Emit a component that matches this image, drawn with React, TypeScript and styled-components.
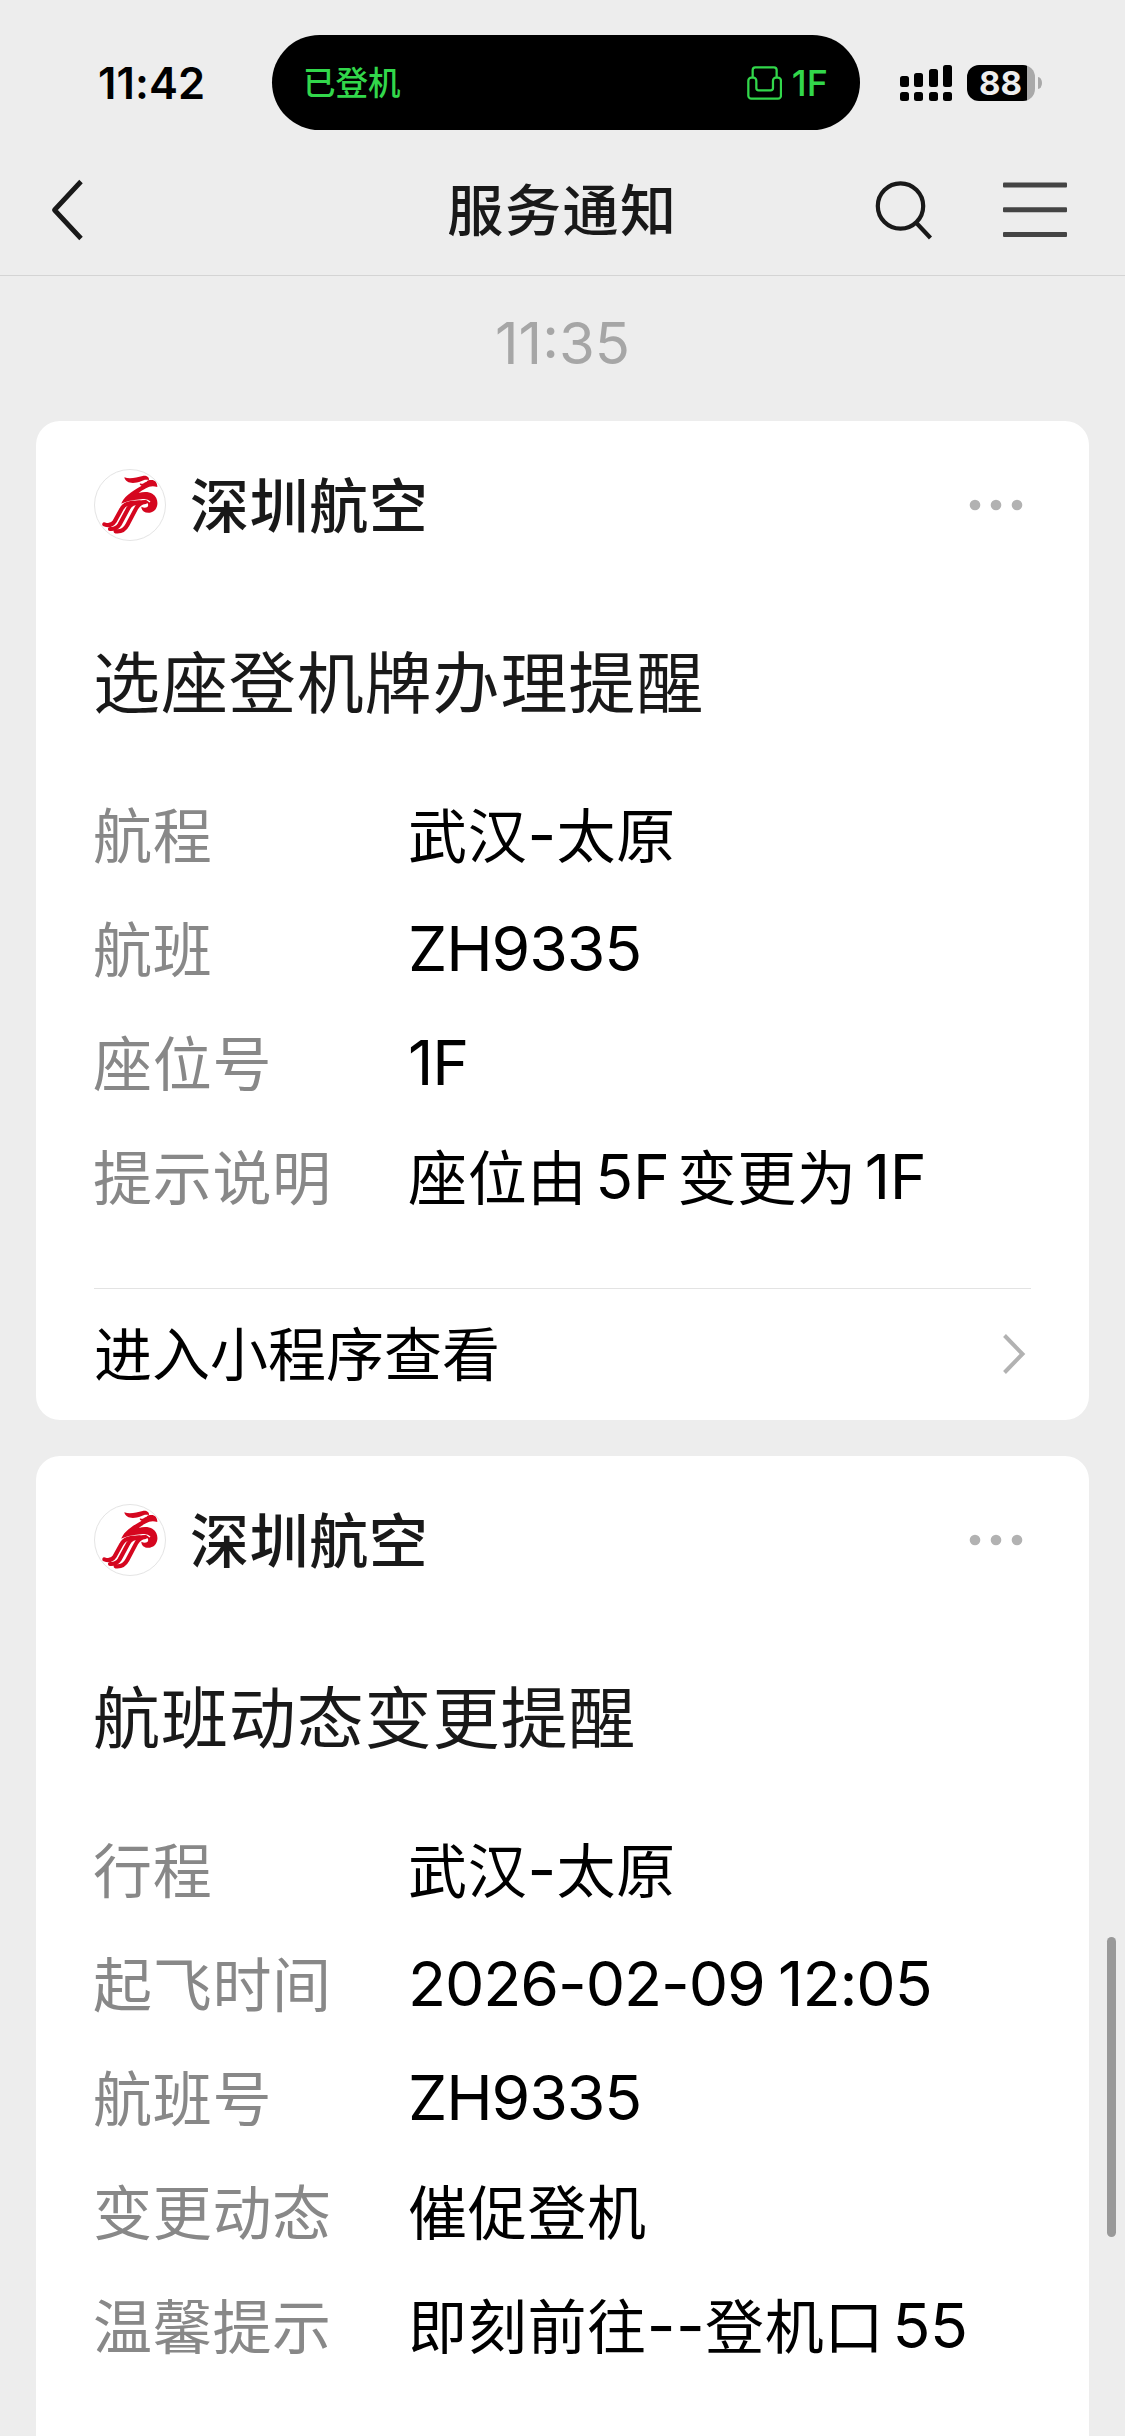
import styled, { createGlobalStyle } from 'styled-components';

type Field = { label: string; value: string };
type Notice = { title: string; fields: Field[]; action?: string };

const notices: Notice[] = [
  {
    title: '选座登机牌办理提醒',
    fields: [
      { label: '航程', value: '武汉-太原' },
      { label: '航班', value: 'ZH9335' },
      { label: '座位号', value: '1F' },
      { label: '提示说明', value: '座位由 5F 变更为 1F' },
    ],
    action: '进入小程序查看',
  },
  {
    title: '航班动态变更提醒',
    fields: [
      { label: '行程', value: '武汉-太原' },
      { label: '起飞时间', value: '2026-02-09 12:05' },
      { label: '航班号', value: 'ZH9335' },
      { label: '变更动态', value: '催促登机' },
      { label: '温馨提示', value: '即刻前往--登机口 55' },
    ],
  },
];

export default function App() {
  return (
    <Screen>
      <GlobalStyle />
      <Header>
        <StatusBar>
          <Clock>11:42</Clock>
          <Island>
            <IslandText>已登机</IslandText>
            <SeatInfo>
              <SeatIcon />
              1F
            </SeatInfo>
          </Island>
          <SignalIcon />
          <Battery>
            <BatteryLevel>88</BatteryLevel>
            <BatteryCap />
          </Battery>
        </StatusBar>
        <NavBar>
          <BackIcon />
          <NavTitle>服务通知</NavTitle>
          <NavActions>
            <SearchIcon />
            <MenuIcon />
          </NavActions>
        </NavBar>
      </Header>
      <Timestamp>11:35</Timestamp>
      <Feed>
        {notices.map((notice) => (
          <NoticeCard key={notice.title} {...notice} />
        ))}
      </Feed>
      <ScrollThumb />
    </Screen>
  );
}

function NoticeCard({ title, fields, action }: Notice) {
  return (
    <Card>
      <CardHeader>
        <AirlineLogo />
        <AirlineName>深圳航空</AirlineName>
        <MoreIcon />
      </CardHeader>
      <CardTitle>{title}</CardTitle>
      <FieldList>
        {fields.map(({ label, value }) => (
          <FieldRow key={label}>
            <FieldLabel>{label}</FieldLabel>
            <FieldValue>
              <MixedText text={value} />
            </FieldValue>
          </FieldRow>
        ))}
      </FieldList>
      {action && (
        <CardAction>
          <span>{action}</span>
          <ChevronIcon />
        </CardAction>
      )}
    </Card>
  );
}

// Latin runs are set slightly larger than the Chinese around them,
// and the spaces between the two scripts are narrower
function MixedText({ text }: { text: string }) {
  return text.split(/([\x20-\x7e]+)/).map((part, i) =>
    i % 2 ? (
      <Latin key={i} $kind={getRunKind(part)}>
        {part}
      </Latin>
    ) : (
      part
    )
  );
}

type RunKind = 'plain' | 'spaced' | 'dash';

function getRunKind(run: string): RunKind {
  if (/^-+$/.test(run)) return 'dash';
  return run === run.trim() ? 'plain' : 'spaced';
}

function SeatIcon() {
  return (
    <svg width="35.300" height="34" viewBox="50 46 106 102" fill="none" stroke="#32d74b" strokeWidth="6.800">
      <path d="M67 82V58a8 8 0 0 1 8-8h56a8 8 0 0 1 8 8v24" />
      <path d="M54 90a9 9 0 0 1 9-9h6a9 9 0 0 1 9 9v22a7 7 0 0 0 7 7h36a7 7 0 0 0 7-7v-22a9 9 0 0 1 9-9h6a9 9 0 0 1 9 9v45a9 9 0 0 1-9 9H63a9 9 0 0 1-9-9z" />
    </svg>
  );
}

function SignalIcon() {
  return (
    <Signal width="52" height="36" viewBox="0 0 52 36">
      <rect x="0" y="11" width="9" height="11" rx="2.500" />
      <rect x="14" y="8" width="9" height="14" rx="2.500" />
      <rect x="29" y="4" width="9" height="18" rx="2.500" />
      <rect x="43" y="0" width="9" height="22" rx="2.500" />
      <rect x="0" y="27" width="9" height="9" rx="2.500" />
      <rect x="14" y="27" width="9" height="9" rx="2.500" />
      <rect x="29" y="27" width="9" height="9" rx="2.500" />
      <rect x="43" y="27" width="9" height="9" rx="2.500" />
    </Signal>
  );
}

function BackIcon() {
  return (
    <svg width="34" height="62" viewBox="0 0 34 62" fill="none" stroke="#191919" strokeWidth="4.800" strokeLinejoin="round">
      <path d="M31 2.500 4.500 31 31 59.500" />
    </svg>
  );
}

function SearchIcon() {
  return (
    <svg width="58" height="60" viewBox="0 0 58 60" fill="none" stroke="#191919" strokeWidth="4.200">
      <circle cx="25.500" cy="26" r="22.700" />
      <path d="M41 42.500 55.500 58" />
    </svg>
  );
}

function MenuIcon() {
  return (
    <svg width="64" height="56" viewBox="0 0 64 56" fill="#444">
      <rect y="0.500" width="64" height="5" rx="1" />
      <rect y="25.300" width="64" height="5" rx="1" />
      <rect y="50" width="64" height="5" rx="1" />
    </svg>
  );
}

function MoreIcon() {
  return (
    <More width="54" height="12" viewBox="0 0 54 12" fill="#b2b2b2">
      <circle cx="6" cy="6" r="5.300" />
      <circle cx="27" cy="6" r="5.300" />
      <circle cx="48" cy="6" r="5.300" />
    </More>
  );
}

function ChevronIcon() {
  return (
    <svg width="24" height="42" viewBox="0 0 24 42" fill="none" stroke="#b2b2b2" strokeWidth="4">
      <path d="M2.500 2.500 20.500 21 2.500 39.500" />
    </svg>
  );
}

function AirlineLogo() {
  return (
    <svg width="72" height="72" viewBox="0 0 216 216">
      <circle cx="108" cy="108" r="106.500" fill="#fff" stroke="#e4e4e4" strokeWidth="3" />
      {/* crest, head and neck */}
      <g fill="#d5061f">
        <path d="M91 25c16 6 36 1 55-4 12-2 20 4 19 12-9-2-17-1-24 4-20 8-46 8-50-12z" />
        <path d="M138 43c8 5 12-3 20-5 2-4 8-5 14-5 11 0 18 8 18 21-14-4-24-2-34 4-9 5-16 9-22 14 16-4 30-4 42 3 22 14 18 52-8 56-16 2-26-6-26-18 8 5 18 4 20-2 3-9-8-14-20-13-24 2-40-1-61 9 6-22 30-39 62-57-4-1-7-4-5-7z" />
      </g>
      <path d="M80 107c22-12 44-13 66-15 10-1 18 2 22 7" fill="none" stroke="#fff" strokeWidth="4" />
      {/* tail feathers */}
      <g fill="none" stroke="#d5061f" strokeWidth="12.500" strokeLinecap="round">
        <path d="M136 101c-32-1-46 4-54 20l-20 36c-8 12-18 14-31 9" />
        <path d="M138 101c-22 0-30 6-35 17l-26 48c-7 11-15 15-29 14" />
        <path d="M154 99c-15 2-22 8-28 20l-26 49c-8 15-18 21-35 19" />
      </g>
    </svg>
  );
}

const GlobalStyle = createGlobalStyle`
  * {
    box-sizing: border-box;
  }

  body {
    margin: 0;
    background: #ededed;
    font-family: Inter, 'Noto Sans CJK SC', sans-serif;
  }

  svg {
    display: block;
    flex-shrink: 0;
  }
`;

const Screen = styled.div`
  position: relative;
  display: flex;
  flex-direction: column;
  height: 2436px;
  overflow: hidden;
  background: #ededed;
`;

const Header = styled.header`
  height: 276px;
  padding-top: 35px;
  border-bottom: 1px solid #d4d4d4;
`;

const StatusBar = styled.div`
  display: flex;
  align-items: center;
  height: 95px;
  padding-left: 98px;
`;

const Clock = styled.div`
  width: 174px;
  font-size: 43.5px;
  font-weight: 600;
  line-height: 94px;
  letter-spacing: 0.1px;
`;

const Island = styled.div`
  display: flex;
  align-items: center;
  justify-content: space-between;
  width: 588px;
  height: 95px;
  padding: 0 32px 0 31px;
  border-radius: 48px;
  background: #000;
  color: #32d74b;
`;

const IslandText = styled.span`
  padding-bottom: 4px;
  font-size: 32.5px;
  font-weight: 500;
`;

const SeatInfo = styled.span`
  display: flex;
  align-items: center;
  gap: 10px;
  font-size: 36px;
  font-weight: 500;
`;

const Signal = styled.svg`
  margin-left: 40px;
`;

const Battery = styled.div`
  display: flex;
  align-items: center;
  margin-left: 15px;
  gap: 3px;
`;

const BatteryLevel = styled.div`
  width: 68px;
  height: 36px;
  padding-left: 12px;
  border-radius: 12px;
  background: linear-gradient(90deg, #000 60px, #a9a9a9 60px);
  color: #ededed;
  font-size: 33px;
  font-weight: 700;
  line-height: 36px;
`;

const BatteryCap = styled.div`
  width: 4px;
  height: 12px;
  border-radius: 0 4px 4px 0 / 0 6px 6px 0;
  background: #a9a9a9;
`;

const NavBar = styled.nav`
  display: grid;
  grid-template-columns: 1fr auto 1fr;
  align-items: center;
  height: 145px;
  padding: 14px 58px 0 50px;
`;

const NavTitle = styled.h1`
  margin: 0;
  padding: 3px 0 0 8px;
  color: #191919;
  font-size: 56px;
  font-weight: 500;
  line-height: 80px;
  letter-spacing: 1.6px;
`;

const NavActions = styled.div`
  display: flex;
  align-items: center;
  justify-content: flex-end;
  gap: 70.5px;
`;

const Timestamp = styled.div`
  height: 145px;
  color: #a6a6a6;
  font-size: 58px;
  line-height: 134px;
  text-align: center;
`;

const Feed = styled.main`
  display: flex;
  flex: 1;
  flex-direction: column;
  gap: 36px;
  padding: 0 36px;
`;

const Card = styled.section`
  flex-shrink: 0;
  height: 999px;
  padding: 48px 58px 0;
  border-radius: 24px;
  background: #fff;

  /* runs on past the bottom of the screen */
  &:last-child {
    flex: 1;
    border-radius: 24px 24px 0 0;
  }
`;

const CardHeader = styled.div`
  display: flex;
  align-items: center;
  height: 72px;
`;

const AirlineName = styled.h2`
  margin: 4px 0 0 24px;
  color: #191919;
  font-size: 59px;
  font-weight: 500;
  line-height: 72px;
  letter-spacing: 0.6px;
`;

const More = styled.svg`
  margin-left: auto;
  margin-right: 8px;
`;

const CardTitle = styled.h3`
  margin: 95px 0 0 -1px;
  color: #191919;
  font-size: 67px;
  font-weight: 400;
  line-height: 96px;
  letter-spacing: 0.9px;
`;

const FieldList = styled.dl`
  display: flex;
  flex-direction: column;
  margin: 48px 0 0 -1px;
`;

const FieldRow = styled.div`
  display: flex;
  height: 114px;
  font-size: 59px;
  line-height: 114px;
  letter-spacing: 0.7px;
`;

const FieldLabel = styled.dt`
  width: 315px;
  color: #888;
`;

const FieldValue = styled.dd`
  margin: 0;
  color: #000;
  white-space: pre;
`;

const letterSpacing: Record<RunKind, string> = {
  plain: '-1.1px',
  spaced: '-0.4px',
  dash: '0.4px',
};

const Latin = styled.span<{ $kind: RunKind }>`
  font-size: 62.5px;
  line-height: 0;
  letter-spacing: ${({ $kind }) => letterSpacing[$kind]};
  word-spacing: ${({ $kind }) => ($kind === 'spaced' ? '-9px' : '-3px')};
  vertical-align: 1px;
`;

const CardAction = styled.div`
  display: flex;
  align-items: center;
  justify-content: space-between;
  height: 132px;
  margin-top: 52px;
  padding: 0 5px 2px 0;
  border-top: 1px solid #e3e3e3;
  font-size: 58px;

  span {
    margin-top: -5px;
  }
`;

const ScrollThumb = styled.div`
  position: absolute;
  top: 1937px;
  right: 9px;
  width: 9px;
  height: 300px;
  border-radius: 5px;
  background: #999;
`;
